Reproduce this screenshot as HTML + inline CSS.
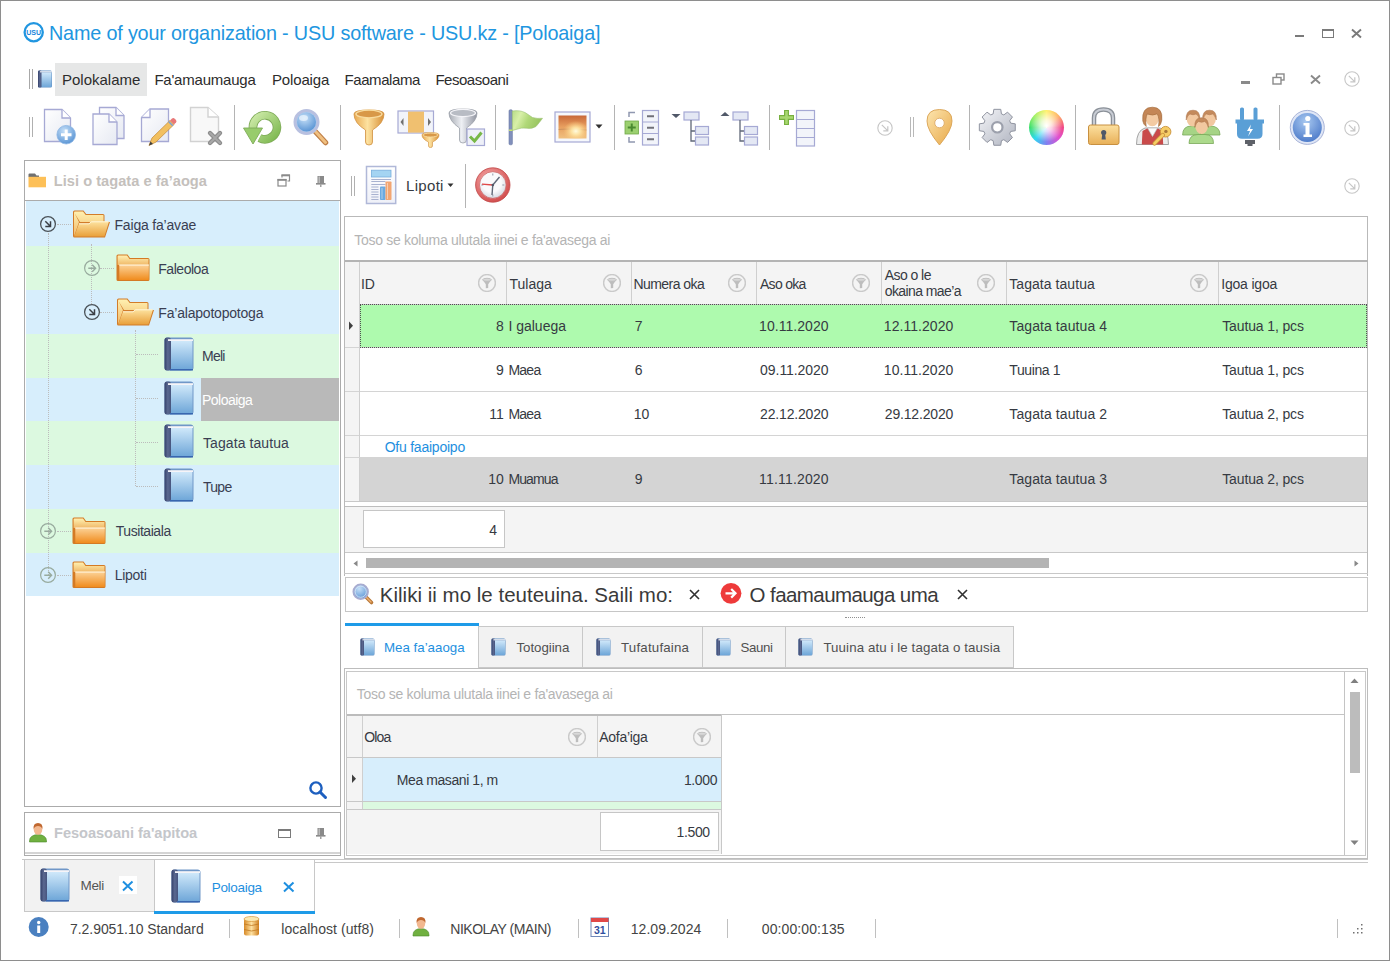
<!DOCTYPE html>
<html><head><meta charset="utf-8"><style>
*{margin:0;padding:0;box-sizing:border-box}
html,body{width:1390px;height:961px;overflow:hidden;background:#fff}
body{position:relative;font-family:"Liberation Sans",sans-serif;color:#333}
.a{position:absolute}
.t{position:absolute;white-space:nowrap;line-height:1}
svg{position:absolute;overflow:visible}
</style></head><body>
<svg width="0" height="0" style="position:absolute">
<defs>
 <linearGradient id="gBook" x1="0" y1="0" x2="0" y2="1"><stop offset="0" stop-color="#cfe8fa"/><stop offset="1" stop-color="#6ea6d8"/></linearGradient>
 <linearGradient id="gSpine" x1="0" y1="0" x2="1" y2="0"><stop offset="0" stop-color="#34406a"/><stop offset="0.5" stop-color="#5a6890"/><stop offset="1" stop-color="#46547e"/></linearGradient>
 <symbol id="book" viewBox="0 0 30 34">
  <rect x="0.5" y="0.5" width="29" height="33" rx="3" fill="#7097c8"/>
  <rect x="1.5" y="4" width="27" height="28.5" fill="url(#gBook)"/>
  <rect x="0.5" y="0.5" width="6.5" height="33" rx="2.5" fill="url(#gSpine)"/>
  <rect x="4" y="2.2" width="25" height="1.8" fill="#f6f4f8"/>
  <rect x="6" y="32" width="23" height="1.5" fill="#3866b0"/>
 </symbol>
 <symbol id="bookS" viewBox="0 0 15 18">
  <rect x="0.5" y="0.5" width="14" height="17" rx="1.5" fill="#5f8fc4"/>
  <rect x="1" y="2.5" width="13" height="14.5" fill="url(#gBook)"/>
  <rect x="0.5" y="0.5" width="3.5" height="17" rx="1.2" fill="url(#gSpine)"/>
  <rect x="2.5" y="1.2" width="12" height="1.2" fill="#f0f0f4"/>
 </symbol>
 <linearGradient id="gFoldB" x1="0" y1="0" x2="0" y2="1"><stop offset="0" stop-color="#fff0b0"/><stop offset="1" stop-color="#f0b868"/></linearGradient>
 <linearGradient id="gFoldF" x1="0" y1="0" x2="0" y2="1"><stop offset="0" stop-color="#fde3a0"/><stop offset="1" stop-color="#e9a03a"/></linearGradient>
 <linearGradient id="gFoldC" x1="0" y1="0" x2="0" y2="1"><stop offset="0" stop-color="#fcd49a"/><stop offset="1" stop-color="#f08c1e"/></linearGradient>
 <symbol id="fOpen" viewBox="0 0 38 28">
  <path d="M1 2Q1 0.5 2.5 0.5H11.5L14.2 4H31Q32.5 4 32.5 5.5V12H38L33 27.5H2.5Q1 27.5 1 26Z" fill="#d27c2a"/>
  <path d="M2 2.2Q2 1.5 3 1.5H11L13.7 5H31Q31.5 5 31.5 5.5V12H8Z M2 2 V26.5 L7 12" fill="url(#gFoldB)"/>
  <path d="M7 13.5H17L19.5 11.5H37L32.4 26.5H2.2Z" fill="url(#gFoldF)"/>
  <path d="M7 13.8H17L19.5 11.8H36.5" fill="none" stroke="#fff6d8" stroke-width="1"/>
 </symbol>
 <symbol id="fClosed" viewBox="0 0 34 27">
  <path d="M0.5 2Q0.5 0.5 2 0.5H11.5L14 4H32Q33.5 4 33.5 5.5V25.5Q33.5 27 32 27H2Q0.5 27 0.5 25.5Z" fill="#d47a24"/>
  <path d="M1.6 2.2Q1.6 1.5 2.4 1.5H11L13.5 5H32.5V11H1.6Z" fill="url(#gFoldB)"/>
  <rect x="3.3" y="10.5" width="29.5" height="15.5" fill="url(#gFoldC)"/>
  <rect x="3.3" y="10.6" width="29.5" height="1" fill="#fff4dc"/>
 </symbol>
 <symbol id="expO" viewBox="0 0 18 18">
  <circle cx="9" cy="9" r="7.4" fill="none" stroke="#4a5258" stroke-width="1.3"/>
  <path d="M6.3 6.3L11.3 11.3M11.5 6.2V11.5H6.3" fill="none" stroke="#3a3f45" stroke-width="1.5"/>
 </symbol>
 <symbol id="expC" viewBox="0 0 18 18">
  <circle cx="9" cy="9" r="7.4" fill="none" stroke="#98ab9e" stroke-width="1.2"/>
  <path d="M5.3 9.2H12.3M9.2 5.7L12.6 9.2L9.2 12.7" fill="none" stroke="#98ab9e" stroke-width="1.4"/>
 </symbol>
 <symbol id="filt" viewBox="0 0 18 18">
  <circle cx="9" cy="9" r="8.4" fill="none" stroke="#cacaca" stroke-width="1.5"/>
  <path d="M4.6 5.8H13.4L10.2 10.2V14L7.8 14.2V10.2Z" fill="#bdbdbd"/>
  <ellipse cx="9" cy="5.8" rx="4.4" ry="1.5" fill="#d8d8d8" stroke="#bdbdbd" stroke-width="0.9"/>
 </symbol>
 <symbol id="cirArr" viewBox="0 0 16 16">
  <circle cx="8" cy="8" r="7.2" fill="none" stroke="#c6c6c6" stroke-width="1.1"/>
  <path d="M4.8 4.8L10.6 10.6M10.8 6.3V10.8H6.3" fill="none" stroke="#c6c6c6" stroke-width="1.2"/>
 </symbol>
</defs></svg>
<div class="a" style="left:0px;top:0px;width:1390px;height:961px;border:1px solid #8e8e8e"></div>
<svg style="left:23px;top:22px" width="22" height="22" viewBox="0 0 22 22"><circle cx="10.7" cy="10.2" r="9.1" fill="none" stroke="#2196e0" stroke-width="2.3"/><text x="3.2" y="12.8" font-family="Liberation Sans" font-size="7.2" font-weight="bold" fill="#1a86dc" textLength="15" lengthAdjust="spacingAndGlyphs">USU</text></svg>
<div class="t" style="top:24.24px;font-size:19.8px;color:#2196e0;letter-spacing:-0.169px;left:49.00px;">Name of your organization - USU software - USU.kz - [Poloaiga]</div>
<div class="a" style="left:1295px;top:35px;width:9px;height:2px;background:#7a7a7a"></div>
<div class="a" style="left:1322px;top:29px;width:12px;height:9px;border:1px solid #7a7a7a;border-top-width:2px"></div>
<svg style="left:1351px;top:29px" width="11" height="9" viewBox="0 0 11 9"><path d="M1 0.5L10 8.5M10 0.5L1 8.5" stroke="#7a7a7a" stroke-width="1.9"/></svg>
<div class="a" style="left:29px;top:69px;width:1px;height:20px;background:#a8a8a8"></div>
<div class="a" style="left:32px;top:69px;width:1px;height:20px;background:#a8a8a8"></div>
<svg style="left:37px;top:70px" width="16" height="18"><use href="#bookS"/></svg>
<div class="a" style="left:55px;top:63px;width:92px;height:33px;background:#e6e7e7"></div>
<div class="t" style="top:72.00px;font-size:15px;color:#2c2c2c;left:62.00px;">Polokalame</div>
<div class="t" style="top:72.00px;font-size:15px;color:#2c2c2c;letter-spacing:-0.219px;left:154.40px;">Fa'amaumauga</div>
<div class="t" style="top:72.00px;font-size:15px;color:#2c2c2c;letter-spacing:-0.148px;left:272.00px;">Poloaiga</div>
<div class="t" style="top:72.00px;font-size:15px;color:#2c2c2c;letter-spacing:-0.419px;left:344.50px;">Faamalama</div>
<div class="t" style="top:72.00px;font-size:15px;color:#2c2c2c;letter-spacing:-0.468px;left:435.40px;">Fesoasoani</div>
<div class="a" style="left:1241px;top:81px;width:9px;height:3px;background:#8a8a8a"></div>
<svg style="left:1272px;top:73px" width="13" height="12" viewBox="0 0 13 12"><rect x="4.5" y="1" width="7.5" height="6" fill="none" stroke="#8a8a8a" stroke-width="1.4"/><rect x="1" y="4.5" width="8" height="6.5" fill="#fff" stroke="#8a8a8a" stroke-width="1.4"/></svg>
<svg style="left:1310px;top:75px" width="11" height="9" viewBox="0 0 11 9"><path d="M1 0.5L10 8.5M10 0.5L1 8.5" stroke="#8a8a8a" stroke-width="1.9"/></svg>
<svg style="left:1344px;top:71px" width="16" height="16"><use href="#cirArr"/></svg>
<div class="a" style="left:29px;top:117px;width:1px;height:20px;background:#b0b0b0"></div>
<div class="a" style="left:32px;top:117px;width:1px;height:20px;background:#b0b0b0"></div>
<svg width="0" height="0" style="position:absolute"><defs>
    <linearGradient id="gPage" x1="0" y1="0" x2="1" y2="1"><stop offset="0" stop-color="#ffffff"/><stop offset="1" stop-color="#e6e9f2"/></linearGradient>
    <radialGradient id="gBlueC" cx="0.4" cy="0.3" r="0.8"><stop offset="0" stop-color="#c6e0f8"/><stop offset="1" stop-color="#4e8cd0"/></radialGradient>
    <linearGradient id="gGold" x1="0" y1="0" x2="1" y2="0"><stop offset="0" stop-color="#e8a850"/><stop offset="0.45" stop-color="#fde2a0"/><stop offset="1" stop-color="#d89038"/></linearGradient>
    <linearGradient id="gSilver" x1="0" y1="0" x2="1" y2="0"><stop offset="0" stop-color="#a8acb4"/><stop offset="0.45" stop-color="#eef0f4"/><stop offset="1" stop-color="#9094a0"/></linearGradient>
    <linearGradient id="gGreen" x1="0" y1="0" x2="1" y2="1"><stop offset="0" stop-color="#cdeaa8"/><stop offset="1" stop-color="#7db850"/></linearGradient>
    </defs></svg>
<svg style="left:40px;top:104px" width="40" height="44" viewBox="0 0 40 44"><path d="M4.5 5.5H22L30.5 14V37.5H4.5Z" fill="url(#gPage)" stroke="#a6a9d4" stroke-width="1.3"/>
      <path d="M22 5.5V14H30.5" fill="#fff" stroke="#a6a9d4" stroke-width="1.3"/>
      <circle cx="26.2" cy="30.7" r="9.3" fill="url(#gBlueC)" stroke="#8fb8e4" stroke-width="0.8"/>
      <path d="M26.2 25.5V36M21 30.7H31.5" stroke="#fff" stroke-width="3"/></svg>
<svg style="left:88px;top:103px" width="40" height="44" viewBox="0 0 40 44"><path d="M11.5 4.5H28L36 12.5V35.5H11.5Z" fill="url(#gPage)" stroke="#a6a9d4" stroke-width="1.3"/>
      <path d="M28 4.5V12.5H36" fill="#fff" stroke="#a6a9d4" stroke-width="1.3"/>
      <path d="M5 11H21L29 19V41.5H5Z" fill="url(#gPage)" stroke="#a6a9d4" stroke-width="1.3"/>
      <path d="M21 11V19H29" fill="#fff" stroke="#a6a9d4" stroke-width="1.3"/></svg>
<svg style="left:137px;top:103px" width="42" height="46" viewBox="0 0 42 46"><path d="M13 6H31.5V38.5H4.5V14.5Z" fill="url(#gPage)" stroke="#a6a9d4" stroke-width="1.3"/>
      <path d="M13 6V14.5H4.5" fill="#fff" stroke="#a6a9d4" stroke-width="1.3"/>
      <path d="M12 42.5L15 35L33 17.5L37 21.5L19 39Z" fill="#f2c060" stroke="#c89040" stroke-width="0.8"/>
      <path d="M33 17.5L35 15.5Q36.5 14.5 38 16L39 17Q40 18.5 39 19.5L37 21.5Z" fill="#e87878"/>
      <path d="M31.8 18.7L35.8 22.7" stroke="#7aa0d8" stroke-width="1.5"/>
      <path d="M12 42.5L13.5 38.5L16 41Z" fill="#404040"/></svg>
<svg style="left:186px;top:103px" width="42" height="46" viewBox="0 0 42 46"><path d="M4.5 4.5H22L32.5 14V38.5H4.5Z" fill="#f8f8f8" stroke="#d2d2d2" stroke-width="1.4"/>
      <path d="M22 4.5V14H32.5" fill="#fff" stroke="#d2d2d2" stroke-width="1.4"/>
      <path d="M24 30L34 40M34 30L24 40" stroke="#8c8c8c" stroke-width="4.4" stroke-linecap="round"/>
      <path d="M24 30L34 40M34 30L24 40" stroke="#a8a8a8" stroke-width="2" stroke-linecap="round"/></svg>
<div class="a" style="left:234px;top:105px;width:1px;height:45px;background:#b4b4b4"></div>
<svg style="left:240px;top:107px" width="44" height="40" viewBox="0 0 44 40"><path d="M13 21.5A12 12 0 1 1 19.5 31" fill="none" stroke="#7eaa58" stroke-width="8.6"/>
      <path d="M13 21.5A12 12 0 1 1 19.5 31" fill="none" stroke="url(#gGreen)" stroke-width="7"/>
      <path d="M3.5 21H22.5L13 37Z" fill="#98cc6c" stroke="#7eaa58" stroke-width="0.9" stroke-linejoin="round"/></svg>
<svg style="left:290px;top:106px" width="42" height="42" viewBox="0 0 42 42"><path d="M22 22L35.5 36.5" stroke="#c08048" stroke-width="5.5" stroke-linecap="round"/>
      <path d="M25 25L35.5 36.5" stroke="#f0c080" stroke-width="3" stroke-linecap="round"/>
      <circle cx="16.5" cy="16" r="11.5" fill="#a8ccf0" stroke="#b8c0e0" stroke-width="3"/>
      <circle cx="16.5" cy="16" r="9.5" fill="url(#gBlueC)"/>
      <ellipse cx="13.5" cy="12" rx="4.5" ry="3" fill="#e8f2fc" opacity="0.8"/></svg>
<div class="a" style="left:340px;top:105px;width:1px;height:45px;background:#b4b4b4"></div>
<svg style="left:350px;top:106px" width="38" height="42" viewBox="0 0 38 42"><path d="M4 8Q4 4 19 4Q34 4 34 8Q34 17 22.5 24V36Q22.5 39 19 39Q15.5 39 15.5 36V24Q4 17 4 8Z" fill="url(#gGold)" stroke="#d09040" stroke-width="0.8"/>
      <ellipse cx="19" cy="8" rx="13" ry="3.8" fill="#d89848" stroke="#f8dca0" stroke-width="1.3"/></svg>
<svg style="left:395px;top:108px" width="46" height="40" viewBox="0 0 46 40"><rect x="3" y="3" width="35.5" height="22" fill="#f2f4fa" stroke="#a6a9d4" stroke-width="1.2"/>
      <rect x="13" y="3.6" width="16" height="21" fill="#f0c070"/>
      <path d="M8.5 10L5.5 14L8.5 18Z M33 10L36 14L33 18Z" fill="#707070"/>
      <path d="M27 27Q27 24.5 35.5 24.5Q44 24.5 44 27Q44 31 37.5 34V38Q37.5 39.5 35.5 39.5Q33.5 39.5 33.5 38V34Q27 31 27 27Z" fill="url(#gGold)" stroke="#d09040" stroke-width="0.6"/>
      <ellipse cx="35.5" cy="27" rx="7.5" ry="2" fill="#d89848" stroke="#f8dca0" stroke-width="0.9"/></svg>
<svg style="left:446px;top:105px" width="42" height="44" viewBox="0 0 42 44"><path d="M3 8Q3 4 17 4Q31 4 31 8Q31 16 20.5 23V35Q20.5 38 17 38Q13.5 38 13.5 35V23Q3 16 3 8Z" fill="url(#gSilver)" stroke="#9aa0a8" stroke-width="0.8"/>
      <ellipse cx="17" cy="8" rx="12.5" ry="3.6" fill="#b8bcc4" stroke="#f4f4f8" stroke-width="1.2"/>
      <rect x="21" y="24" width="17.5" height="16.5" fill="#eef0f8" stroke="#a6a9d4" stroke-width="1.2"/>
      <path d="M24 31.5L28.5 36L35.5 27.5" fill="none" stroke="#78b848" stroke-width="3"/></svg>
<div class="a" style="left:495px;top:105px;width:1px;height:45px;background:#b4b4b4"></div>
<svg style="left:505px;top:106px" width="42" height="42" viewBox="0 0 42 42"><defs><linearGradient id="gFlag" x1="0" y1="0" x2="1" y2="0.3"><stop offset="0" stop-color="#b8dc88"/><stop offset="0.3" stop-color="#d8f0a8"/><stop offset="0.6" stop-color="#b0d878"/><stop offset="1" stop-color="#98c460"/></linearGradient></defs>
      <rect x="4" y="3.8" width="3.4" height="35" rx="1.2" fill="#8290bc" stroke="#6a78a4" stroke-width="0.6"/>
      <rect x="4" y="23.5" width="3.4" height="1.5" fill="#c8e070"/>
      <path d="M7.4 5Q15 3.8 20.5 6.8Q24.5 9.5 27.5 11.5Q32 12.8 37.5 12.3Q34.5 16.5 31 20.5Q27 23.2 22 22.2Q16 21.5 12 23.2L7.4 24.5Z" fill="url(#gFlag)" stroke="#98c070" stroke-width="0.6"/></svg>
<svg style="left:552px;top:109px" width="42" height="36" viewBox="0 0 42 36"><defs><linearGradient id="gSun" x1="0" y1="0" x2="0" y2="1"><stop offset="0" stop-color="#c86838"/><stop offset="0.5" stop-color="#e8a060"/><stop offset="1" stop-color="#f0c080"/></linearGradient>
      <radialGradient id="gGlow" cx="0.62" cy="0.68" r="0.45"><stop offset="0" stop-color="#fffbe0"/><stop offset="0.35" stop-color="#ffe8a8" stop-opacity="0.9"/><stop offset="1" stop-color="#ffd080" stop-opacity="0"/></radialGradient></defs>
      <rect x="3" y="3" width="35" height="30" fill="#f6f8fc" stroke="#a6a9d4" stroke-width="1.2"/>
      <rect x="6.5" y="6.5" width="28" height="23" fill="url(#gSun)"/>
      <path d="M6.5 20.5Q16 19.5 34.5 21" stroke="#a07050" stroke-width="0.8" fill="none" opacity="0.5"/>
      <rect x="6.5" y="6.5" width="28" height="23" fill="url(#gGlow)"/></svg>
<svg style="left:595px;top:124px" width="9" height="5" viewBox="0 0 9 5"><path d="M0.5 0.5H7.5L4 4.5Z" fill="#303030"/></svg>
<div class="a" style="left:614px;top:105px;width:1px;height:45px;background:#b4b4b4"></div>
<svg style="left:622px;top:107px" width="42" height="42" viewBox="0 0 42 42"><path d="M7 10V5.5H13 M7 30V35H13" fill="none" stroke="#9098b0" stroke-width="1.5"/>
      <rect x="3" y="14" width="13.5" height="13" fill="#9cd070" stroke="#70a848" stroke-width="0.8"/>
      <path d="M9.75 16.5V24.5M5.75 20.5H13.75" stroke="#4a8a30" stroke-width="2"/>
      <rect x="20.5" y="3.5" width="16" height="34.5" fill="#f2f4fa" stroke="#a6a9d4" stroke-width="1.2"/>
      <path d="M20.5 15H36.5M20.5 26.5H36.5" stroke="#a6a9d4" stroke-width="1.2"/>
      <path d="M25 9.3H32M25 20.8H32M25 32.3H32" stroke="#707078" stroke-width="2"/></svg>
<svg style="left:668px;top:107px" width="44" height="40" viewBox="0 0 44 40"><path d="M3.5 7H12.5L8 11Z" fill="#505868"/><rect x="16" y="5" width="15" height="8" fill="#e4e8f4" stroke="#a6a9d4" stroke-width="1.2"/>
        <path d="M23 13V34H28 M23 24H28" fill="none" stroke="#606878" stroke-width="1.3"/>
        <rect x="27.5" y="19.5" width="13" height="8" fill="#e4e8f4" stroke="#a6a9d4" stroke-width="1.2"/>
        <rect x="27.5" y="30" width="13" height="8" fill="#e4e8f4" stroke="#a6a9d4" stroke-width="1.2"/></svg>
<svg style="left:717px;top:107px" width="44" height="40" viewBox="0 0 44 40"><path d="M3.5 9L8 5L12.5 9Z" fill="#505868"/><rect x="16" y="5" width="15" height="8" fill="#e4e8f4" stroke="#a6a9d4" stroke-width="1.2"/>
        <path d="M23 13V34H28 M23 24H28" fill="none" stroke="#606878" stroke-width="1.3"/>
        <rect x="27.5" y="19.5" width="13" height="8" fill="#e4e8f4" stroke="#a6a9d4" stroke-width="1.2"/>
        <rect x="27.5" y="30" width="13" height="8" fill="#e4e8f4" stroke="#a6a9d4" stroke-width="1.2"/></svg>
<div class="a" style="left:769px;top:105px;width:1px;height:45px;background:#b4b4b4"></div>
<svg style="left:776px;top:106px" width="42" height="42" viewBox="0 0 42 42"><path d="M10.5 4V19M3 11.5H18" stroke="#78b040" stroke-width="5"/>
      <path d="M10.5 5V18M4 11.5H17" stroke="#a8d870" stroke-width="2.6"/>
      <rect x="20.5" y="4.5" width="18" height="35.5" fill="#f2f4fa" stroke="#a6a9d4" stroke-width="1.2"/>
      <path d="M20.5 13.5H38.5M20.5 22.5H38.5M20.5 31.5H38.5" stroke="#a6a9d4" stroke-width="1.1"/></svg>
<svg style="left:877px;top:120px" width="16" height="16"><use href="#cirArr"/></svg>
<div class="a" style="left:910px;top:117px;width:1px;height:20px;background:#b8b8b8"></div>
<div class="a" style="left:913px;top:117px;width:1px;height:20px;background:#b8b8b8"></div>
<svg style="left:922px;top:106px" width="36" height="42" viewBox="0 0 36 42"><defs><linearGradient id="gPin" x1="0" y1="0" x2="1" y2="1"><stop offset="0" stop-color="#fde6b0"/><stop offset="1" stop-color="#e8a848"/></linearGradient></defs>
      <path d="M17.5 39Q5 24 5 15Q5 3.5 17.5 3.5Q30 3.5 30 15Q30 24 17.5 39Z" fill="url(#gPin)" stroke="#d8a050" stroke-width="0.9"/>
      <circle cx="17.5" cy="17" r="4.8" fill="#fff" stroke="#e0b070" stroke-width="1"/></svg>
<div class="a" style="left:969px;top:105px;width:1px;height:45px;background:#b4b4b4"></div>
<svg style="left:978px;top:108px" width="38" height="38" viewBox="0 0 38 38"><defs><linearGradient id="gGear" x1="0" y1="0" x2="1" y2="1"><stop offset="0" stop-color="#f4f5f8"/><stop offset="1" stop-color="#b0b4c0"/></linearGradient></defs>
      <polygon points="15.16,5.93 15.84,1.33 22.76,1.33 23.44,5.93 25.83,6.92 29.56,4.15 34.45,9.04 31.68,12.77 32.67,15.16 37.27,15.84 37.27,22.76 32.67,23.44 31.68,25.83 34.45,29.56 29.56,34.45 25.83,31.68 23.44,32.67 22.76,37.27 15.84,37.27 15.16,32.67 12.77,31.68 9.04,34.45 4.15,29.56 6.92,25.83 5.93,23.44 1.33,22.76 1.33,15.84 5.93,15.16 6.92,12.77 4.15,9.04 9.04,4.15 12.77,6.92" fill="url(#gGear)" stroke="#9094a0" stroke-width="1" stroke-linejoin="round"/>
      <circle cx="19.3" cy="19.3" r="5.2" fill="#fff" stroke="#9ca0ac" stroke-width="2.2"/></svg>
<div class="a" style="left:1029px;top:110px;width:35px;height:35px;border-radius:50%;background:conic-gradient(from 0deg,#fff060,#ffb060 45deg,#f04888 90deg,#e050d0 130deg,#8080f0 180deg,#30d8f0 225deg,#40e070 270deg,#a0f060 315deg,#fff060)"></div>
<div class="a" style="left:1029px;top:110px;width:35px;height:35px;border-radius:50%;background:radial-gradient(circle at 50% 45%,rgba(255,255,255,1) 0,rgba(255,255,255,0.75) 22%,rgba(255,255,255,0) 62%)"></div>
<div class="a" style="left:1075px;top:105px;width:1px;height:45px;background:#b4b4b4"></div>
<svg style="left:1085px;top:106px" width="38" height="42" viewBox="0 0 38 42"><defs><linearGradient id="gLock" x1="0" y1="0" x2="0" y2="1"><stop offset="0" stop-color="#fce0a0"/><stop offset="1" stop-color="#e8b058"/></linearGradient></defs>
      <path d="M9 20V12Q9 3.5 18.5 3.5Q28 3.5 28 12V20" fill="none" stroke="#8a9098" stroke-width="4.5"/>
      <path d="M9 20V12Q9 3.5 18.5 3.5Q28 3.5 28 12V20" fill="none" stroke="#c8ccd4" stroke-width="2"/>
      <rect x="3.5" y="19" width="30.5" height="19.5" rx="2" fill="url(#gLock)" stroke="#c89040" stroke-width="1"/>
      <circle cx="18.7" cy="26.5" r="2.6" fill="#505868"/><path d="M17.3 27.5H20.1L20.8 33.5H16.6Z" fill="#505868"/></svg>
<svg style="left:1133px;top:104px" width="42" height="44" viewBox="0 0 42 44"><path d="M3.5 40.5Q3.5 26.5 12 24H27Q35.5 26.5 35.5 40.5Z" fill="#ececec" stroke="#9a9a9a" stroke-width="0.9"/>
      <path d="M8.8 40.5L9.5 27L15 24L19.5 32.5L24 24L29.5 27L30.2 40.5Z" fill="#c94a4a"/>
      <path d="M14.5 24L19.5 32.5L24.5 24Z" fill="#fafafa" stroke="#b8b8b8" stroke-width="0.7"/>
      <ellipse cx="19.3" cy="14.5" rx="6.6" ry="7.8" fill="#f3caa2"/>
      <path d="M9.8 17Q8.5 3 19.5 3.2Q30 3.4 28.8 16Q28 21 25.5 22.5Q26.8 14 24.2 9.8Q20 12.2 14.2 10Q12.2 14 13.2 22.5Q10.3 20.5 9.8 17Z" fill="#c48656" stroke="#a06838" stroke-width="0.6"/>
      <circle cx="32.6" cy="27.7" r="5.3" fill="#f6cd66" stroke="#c89038" stroke-width="0.9"/><circle cx="32.9" cy="27.4" r="1.7" fill="#a87838"/>
      <path d="M29.8 31L21.5 39.5" stroke="#c89038" stroke-width="4.2" stroke-linecap="round"/><path d="M29.8 31L21.5 39.5" stroke="#f6cd66" stroke-width="2.6" stroke-linecap="round"/></svg>
<svg style="left:1180px;top:106px" width="42" height="42" viewBox="0 0 42 42"><path d="M2.6 29Q2.6 20 11.5 20H14Q21 20 21 29Z" fill="#a6d486" stroke="#78a858" stroke-width="0.8"/><path d="M20.5 29Q20.5 20 27.5 20H30Q40 20 40 29Z" fill="#a6d486" stroke="#78a858" stroke-width="0.8"/><ellipse cx="13" cy="13" rx="6.3" ry="7.6" fill="#f2c8a0"/><path d="M6.2 14Q5.5 4 13 4.2Q20.5 4 19.8 14Q18.5 9 16 8Q13 9.5 10 8Q7.5 9 6.2 14Z" fill="#c48a5c" stroke="#a87048" stroke-width="0.5"/><ellipse cx="29.5" cy="13" rx="6.3" ry="7.6" fill="#f2c8a0"/><path d="M22.7 14Q22.0 4 29.5 4.2Q37.0 4 36.3 14Q35.0 9 32.5 8Q29.5 9.5 26.5 8Q24.0 9 22.7 14Z" fill="#c48a5c" stroke="#a87048" stroke-width="0.5"/><path d="M9 37.5Q9 28.5 18 28.5H25Q33.5 28.5 33.5 37.5Z" fill="#acda8c" stroke="#78a858" stroke-width="0.8"/><ellipse cx="21.6" cy="20.5" rx="6.3" ry="7.6" fill="#f2c8a0"/><path d="M14.8 21.5Q14.100000000000001 11.5 21.6 11.7Q29.1 11.5 28.400000000000002 21.5Q27.1 16.5 24.6 15.5Q21.6 17.0 18.6 15.5Q16.1 16.5 14.8 21.5Z" fill="#c48a5c" stroke="#a87048" stroke-width="0.5"/></svg>
<svg style="left:1232px;top:104px" width="36" height="46" viewBox="0 0 36 46"><rect x="8" y="3.5" width="4" height="13" rx="1.6" fill="#5a9fd6"/><rect x="21.5" y="3.5" width="4" height="13" rx="1.6" fill="#5a9fd6"/>
      <path d="M3.5 15.5H32V19.5H30.5V30Q30.5 34.8 25.5 34.8H10Q5 34.8 5 30V19.5H3.5Z" fill="#5a9fd6"/>
      <path d="M19 20.5L15 27H18L16 32.5L21 25H18Z" fill="#fff"/>
      <rect x="13" y="36" width="10" height="4" fill="#5e6168"/><rect x="15.5" y="40" width="5" height="2" fill="#5e6168"/></svg>
<div class="a" style="left:1279px;top:105px;width:1px;height:45px;background:#b4b4b4"></div>
<svg style="left:1287px;top:107px" width="42" height="42" viewBox="0 0 42 42"><defs><radialGradient id="gInfo" cx="0.45" cy="0.3" r="0.75"><stop offset="0" stop-color="#a8c8f0"/><stop offset="1" stop-color="#4a78c8"/></radialGradient></defs>
      <circle cx="20.3" cy="20.4" r="17" fill="#dfe6f6" stroke="#a8b4d8" stroke-width="1"/>
      <circle cx="20.3" cy="20.4" r="14.5" fill="url(#gInfo)"/>
      <circle cx="20.8" cy="11.5" r="2.6" fill="#fff"/>
      <path d="M16.5 16H22.5V27.5H25V30H16.5V27.5H18.5V18.5H16.5Z" fill="#fff"/></svg>
<svg style="left:1344px;top:120px" width="16" height="16"><use href="#cirArr"/></svg>
<div class="a" style="left:24px;top:160px;width:317px;height:647px;border:1px solid #ababab;background:#fff"></div>
<div class="a" style="left:24px;top:200px;width:317px;height:1px;background:#ababab"></div>
<svg style="left:28px;top:173px" width="20" height="16" viewBox="0 0 20 16"><path d="M0.5 1.5Q0.5 0.5 1.5 0.5H7L8.5 2.5H11V4H0.5Z" fill="#707070"/><rect x="0.5" y="3.8" width="17.5" height="10.5" fill="#fdc058"/></svg>
<div class="t" style="top:173.54px;font-size:14.6px;color:#c4c0bc;font-weight:bold;letter-spacing:0.030px;left:53.80px;">Lisi o tagata e fa’aoga</div>
<svg style="left:276px;top:173px" width="16" height="16" viewBox="0 0 16 16"><path d="M6 4.5V2H13.5V8H11.5" fill="none" stroke="#8a8a8a" stroke-width="1.2"/><rect x="5.5" y="1.5" width="8.5" height="1.8" fill="#8a8a8a"/><rect x="2" y="6.5" width="8" height="6.5" fill="#fff" stroke="#8a8a8a" stroke-width="1.2"/><rect x="1.5" y="6" width="9" height="1.8" fill="#8a8a8a"/></svg>
<svg style="left:314px;top:174px" width="14" height="14" viewBox="0 0 14 14"><rect x="3.5" y="2" width="6.5" height="7.2" fill="#8a8a8a"/><rect x="4.6" y="2.5" width="1.2" height="6.5" fill="#c8c8c8"/><rect x="2" y="9" width="9.5" height="1.6" fill="#8a8a8a"/><rect x="6.2" y="10.5" width="1.2" height="2.5" fill="#8a8a8a"/></svg>
<div class="a" style="left:26px;top:201px;width:313px;height:45px;background:#d7eefc"></div>
<div class="a" style="left:26px;top:246px;width:313px;height:44px;background:#dcf9e0"></div>
<div class="a" style="left:26px;top:290px;width:313px;height:44px;background:#d7eefc"></div>
<div class="a" style="left:26px;top:334px;width:313px;height:44px;background:#dcf9e0"></div>
<div class="a" style="left:26px;top:378px;width:313px;height:43px;background:#d7eefc"></div>
<div class="a" style="left:26px;top:421px;width:313px;height:44px;background:#dcf9e0"></div>
<div class="a" style="left:26px;top:465px;width:313px;height:44px;background:#d7eefc"></div>
<div class="a" style="left:26px;top:509px;width:313px;height:44px;background:#dcf9e0"></div>
<div class="a" style="left:26px;top:553px;width:313px;height:43px;background:#d7eefc"></div>
<div class="a" style="left:48px;top:233px;width:1px;height:342px;border-left:1px dotted #bcbcbc"></div>
<div class="a" style="left:57px;top:224px;width:14px;height:1px;border-top:1px dotted #bcbcbc"></div>
<div class="a" style="left:91px;top:244px;width:1px;height:60px;border-left:1px dotted #bcbcbc"></div>
<div class="a" style="left:100px;top:268px;width:14px;height:1px;border-top:1px dotted #bcbcbc"></div>
<div class="a" style="left:100px;top:312px;width:14px;height:1px;border-top:1px dotted #bcbcbc"></div>
<div class="a" style="left:135px;top:330px;width:1px;height:156px;border-left:1px dotted #bcbcbc"></div>
<div class="a" style="left:136px;top:354px;width:22px;height:1px;border-top:1px dotted #bcbcbc"></div>
<div class="a" style="left:136px;top:398px;width:22px;height:1px;border-top:1px dotted #bcbcbc"></div>
<div class="a" style="left:136px;top:442px;width:22px;height:1px;border-top:1px dotted #bcbcbc"></div>
<div class="a" style="left:136px;top:486px;width:22px;height:1px;border-top:1px dotted #bcbcbc"></div>
<div class="a" style="left:57px;top:531px;width:14px;height:1px;border-top:1px dotted #bcbcbc"></div>
<div class="a" style="left:57px;top:575px;width:14px;height:1px;border-top:1px dotted #bcbcbc"></div>
<svg style="left:39px;top:215px" width="18" height="18"><use href="#expO"/></svg>
<svg style="left:72px;top:210px" width="38" height="28"><use href="#fOpen"/></svg>
<div class="t" style="top:218.15px;font-size:14px;color:#3a3e52;letter-spacing:-0.189px;left:114.50px;">Faiga fa’avae</div>
<svg style="left:83px;top:259px" width="18" height="18"><use href="#expC"/></svg>
<svg style="left:116px;top:254px" width="34" height="27"><use href="#fClosed"/></svg>
<div class="t" style="top:261.95px;font-size:14px;color:#3a3e52;letter-spacing:-0.474px;left:158.30px;">Faleoloa</div>
<svg style="left:83px;top:303px" width="18" height="18"><use href="#expO"/></svg>
<svg style="left:116px;top:298px" width="38" height="28"><use href="#fOpen"/></svg>
<div class="t" style="top:305.65px;font-size:14px;color:#3a3e52;letter-spacing:-0.201px;left:158.30px;">Fa’alapotopotoga</div>
<svg style="left:164px;top:337px" width="30" height="34"><use href="#book"/></svg>
<div class="t" style="top:349.45px;font-size:14px;color:#3a3e52;letter-spacing:-0.753px;left:202.00px;">Meli</div>
<svg style="left:164px;top:381px" width="30" height="34"><use href="#book"/></svg>
<div class="a" style="left:201px;top:378px;width:138px;height:43px;background:#b9b9b9"></div>
<div class="t" style="top:392.65px;font-size:14px;color:#ffffff;letter-spacing:-0.529px;left:202.00px;">Poloaiga</div>
<svg style="left:164px;top:424px" width="30" height="34"><use href="#book"/></svg>
<div class="t" style="top:436.15px;font-size:14px;color:#3a3e52;letter-spacing:0.078px;left:203.00px;">Tagata tautua</div>
<svg style="left:164px;top:468px" width="30" height="34"><use href="#book"/></svg>
<div class="t" style="top:479.95px;font-size:14px;color:#3a3e52;letter-spacing:-0.735px;left:203.00px;">Tupe</div>
<svg style="left:39px;top:522px" width="18" height="18"><use href="#expC"/></svg>
<svg style="left:72px;top:517px" width="34" height="27"><use href="#fClosed"/></svg>
<div class="t" style="top:524.35px;font-size:14px;color:#3a3e52;letter-spacing:-0.435px;left:115.70px;">Tusitaiala</div>
<svg style="left:39px;top:566px" width="18" height="18"><use href="#expC"/></svg>
<svg style="left:72px;top:561px" width="34" height="27"><use href="#fClosed"/></svg>
<div class="t" style="top:568.15px;font-size:14px;color:#3a3e52;letter-spacing:-0.272px;left:114.70px;">Lipoti</div>
<svg style="left:308px;top:780px" width="22" height="22" viewBox="0 0 22 22"><circle cx="8" cy="8" r="5.6" fill="none" stroke="#1d5fbf" stroke-width="2.4"/><path d="M12 12L17.5 17.5" stroke="#1d5fbf" stroke-width="3" stroke-linecap="round"/></svg>
<div class="a" style="left:24px;top:812px;width:317px;height:44px;border:1px solid #ababab;background:#fff"></div>
<div class="a" style="left:25px;top:852px;width:315px;height:2px;background:#d4d4d4"></div>
<svg style="left:28px;top:822px" width="22" height="22" viewBox="0 0 22 22"><path d="M1.5 19Q1.5 13 10 12.5Q18.5 13 18.5 19V20H1.5Z" fill="#70b040" stroke="#4a8a28" stroke-width="0.6"/><ellipse cx="10" cy="7.5" rx="4.3" ry="5.2" fill="#f2b890"/><path d="M5.5 7Q5 1 10 1Q15 1 14.5 7Q13 4 10 4Q7 4 5.5 7Z" fill="#c06830"/></svg>
<div class="t" style="top:826.14px;font-size:14.6px;color:#c4c6ca;font-weight:bold;letter-spacing:-0.034px;left:54.00px;">Fesoasoani fa'apitoa</div>
<div class="a" style="left:278px;top:829px;width:13px;height:9px;border:1px solid #7a7a7a;border-top-width:2px"></div>
<svg style="left:314px;top:826px" width="14" height="14" viewBox="0 0 14 14"><rect x="3.5" y="2" width="6.5" height="7.2" fill="#8a8a8a"/><rect x="4.6" y="2.5" width="1.2" height="6.5" fill="#c8c8c8"/><rect x="2" y="9" width="9.5" height="1.6" fill="#8a8a8a"/><rect x="6.2" y="10.5" width="1.2" height="2.5" fill="#8a8a8a"/></svg>
<div class="a" style="left:351px;top:176px;width:1px;height:20px;background:#b0b0b0"></div>
<div class="a" style="left:354px;top:176px;width:1px;height:20px;background:#b0b0b0"></div>
<svg style="left:364px;top:165px" width="34" height="40" viewBox="0 0 34 40"><defs><linearGradient id="gRep" x1="0" y1="0" x2="0" y2="1"><stop offset="0" stop-color="#ffffff"/><stop offset="1" stop-color="#eef0f8"/></linearGradient></defs>
      <rect x="2.5" y="1.5" width="29.2" height="37" fill="url(#gRep)" stroke="#b0b8d8" stroke-width="1.5"/>
      <rect x="7.5" y="5.2" width="19.5" height="6.8" fill="#a4d4f2" stroke="#78aedc" stroke-width="0.8"/>
      <path d="M7.3 14.5H27M7.3 16.5H21.5M7.3 19.5H21.5M7.3 22H14.5M7.3 24.5H14.5M7.3 27H14.5M7.3 29.5H14.5M7.3 32H14.5M7.3 34.5H14.5" stroke="#a8b2d0" stroke-width="1"/>
      <rect x="16" y="21.5" width="5.5" height="13.5" rx="0.8" fill="#6aaae0"/>
      <rect x="21.5" y="16.5" width="6" height="18.5" rx="0.8" fill="#f2a672"/>
      <path d="M18 23V34M23.5 18V34" stroke="#ffffff" stroke-width="1" opacity="0.45"/></svg>
<div class="t" style="top:178.20px;font-size:15px;color:#363a42;letter-spacing:0.295px;left:406.10px;">Lipoti</div>
<svg style="left:447px;top:183px" width="7" height="5" viewBox="0 0 7 5"><path d="M0.5 0.5H6.5L3.5 4Z" fill="#303030"/></svg>
<div class="a" style="left:465px;top:164px;width:1px;height:44px;background:#b4b4b4"></div>
<svg style="left:473px;top:166px" width="40" height="40" viewBox="0 0 40 40"><defs><radialGradient id="gClockR" cx="0.4" cy="0.35" r="0.7"><stop offset="0" stop-color="#f8b0b0"/><stop offset="1" stop-color="#d04848"/></radialGradient>
      <radialGradient id="gClock" cx="0.45" cy="0.4" r="0.6"><stop offset="0.6" stop-color="#fafafc"/><stop offset="1" stop-color="#d8dce4"/></radialGradient></defs>
      <circle cx="19.8" cy="19" r="17.2" fill="url(#gClockR)" stroke="#c04848" stroke-width="0.8"/>
      <circle cx="19.8" cy="19" r="13.3" fill="url(#gClock)" stroke="#c86060" stroke-width="0.7"/>
      <path d="M19.8 7.5V9.5M19.8 28.5V30.5M8.3 19H10.3M29.3 19H31.3" stroke="#9098a8" stroke-width="1"/>
      <path d="M19.8 19L26.5 11" stroke="#606878" stroke-width="1.4"/><path d="M19.8 19L19 29" stroke="#606878" stroke-width="1.4"/><path d="M9 18.2L19.8 19" stroke="#e04848" stroke-width="1.3"/>
      <circle cx="19.8" cy="19" r="1.3" fill="#505868"/></svg>
<svg style="left:1344px;top:178px" width="16" height="16"><use href="#cirArr"/></svg>
<div class="a" style="left:344px;top:216px;width:1024px;height:360px;border:1px solid #b9b9b9;border-bottom:none;background:#fff"></div>
<div class="t" style="top:233.15px;font-size:14px;color:#b4b4b4;letter-spacing:-0.296px;left:354.30px;">Toso se koluma ulutala iinei e fa'avasega ai</div>
<div class="a" style="left:345px;top:260px;width:1023px;height:2px;background:#b4b4b4"></div>
<div class="a" style="left:345px;top:262px;width:1022px;height:42px;background:#f4f4f4"></div>
<div class="a" style="left:345px;top:304px;width:1022px;height:1px;background:#c8c8c8"></div>
<div class="a" style="left:359px;top:262px;width:1px;height:42px;background:#cfcfcf"></div>
<div class="a" style="left:506px;top:262px;width:1px;height:42px;background:#cfcfcf"></div>
<div class="a" style="left:631px;top:262px;width:1px;height:42px;background:#cfcfcf"></div>
<div class="a" style="left:756px;top:262px;width:1px;height:42px;background:#cfcfcf"></div>
<div class="a" style="left:881px;top:262px;width:1px;height:42px;background:#cfcfcf"></div>
<div class="a" style="left:1006px;top:262px;width:1px;height:42px;background:#cfcfcf"></div>
<div class="a" style="left:1218px;top:262px;width:1px;height:42px;background:#cfcfcf"></div>
<div class="t" style="top:276.95px;font-size:14px;color:#363a42;left:360.90px;">ID</div>
<svg style="left:477.6px;top:274.4px" width="18" height="18"><use href="#filt"/></svg>
<div class="t" style="top:276.95px;font-size:14px;color:#363a42;left:509.50px;">Tulaga</div>
<svg style="left:602.5px;top:274.4px" width="18" height="18"><use href="#filt"/></svg>
<div class="t" style="top:276.95px;font-size:14px;color:#363a42;letter-spacing:-0.552px;left:633.40px;">Numera oka</div>
<svg style="left:727.5px;top:274.4px" width="18" height="18"><use href="#filt"/></svg>
<div class="t" style="top:276.95px;font-size:14px;color:#363a42;letter-spacing:-0.717px;left:760.00px;">Aso oka</div>
<svg style="left:852px;top:274.4px" width="18" height="18"><use href="#filt"/></svg>
<div class="t" style="top:276.95px;font-size:14px;color:#363a42;letter-spacing:0.053px;left:1009.30px;">Tagata tautua</div>
<svg style="left:1190px;top:274.4px" width="18" height="18"><use href="#filt"/></svg>
<div class="t" style="top:276.95px;font-size:14px;color:#363a42;letter-spacing:-0.178px;left:1221.20px;">Igoa igoa</div>
<div class="t" style="top:267.75px;font-size:14px;color:#363a42;letter-spacing:-0.543px;left:884.70px;">Aso o le</div>
<div class="t" style="top:284.15px;font-size:14px;color:#363a42;letter-spacing:-0.590px;left:884.70px;">okaina mae’a</div>
<svg style="left:977.3px;top:274.4px" width="18" height="18"><use href="#filt"/></svg>
<div class="a" style="left:345px;top:304px;width:14px;height:198px;background:#f4f4f4"></div>
<div class="a" style="left:360px;top:305px;width:1007px;height:42px;background:#aefaae"></div>
<div class="a" style="left:345px;top:347px;width:1022px;height:1px;background:#d4d4d4"></div>
<div class="t" style="top:319.15px;font-size:14px;color:#363a42;left:496.00px;">8</div>
<div class="t" style="top:319.15px;font-size:14px;color:#363a42;left:508.40px;">I galuega</div>
<div class="t" style="top:319.15px;font-size:14px;color:#363a42;left:634.70px;">7</div>
<div class="t" style="top:319.15px;font-size:14px;color:#363a42;letter-spacing:0.051px;left:759.10px;">10.11.2020</div>
<div class="t" style="top:319.15px;font-size:14px;color:#363a42;letter-spacing:0.051px;left:883.80px;">12.11.2020</div>
<div class="t" style="top:319.15px;font-size:14px;color:#363a42;letter-spacing:0.090px;left:1009.30px;">Tagata tautua 4</div>
<div class="t" style="top:319.15px;font-size:14px;color:#363a42;letter-spacing:-0.123px;left:1222.20px;">Tautua 1, pcs</div>
<div class="a" style="left:360px;top:348px;width:1007px;height:43px;background:#ffffff"></div>
<div class="a" style="left:345px;top:391px;width:1022px;height:1px;background:#d4d4d4"></div>
<div class="t" style="top:362.85px;font-size:14px;color:#363a42;left:496.00px;">9</div>
<div class="t" style="top:362.85px;font-size:14px;color:#363a42;letter-spacing:-0.745px;left:508.40px;">Maea</div>
<div class="t" style="top:362.85px;font-size:14px;color:#363a42;left:634.70px;">6</div>
<div class="t" style="top:362.85px;font-size:14px;color:#363a42;letter-spacing:-0.060px;left:760.10px;">09.11.2020</div>
<div class="t" style="top:362.85px;font-size:14px;color:#363a42;letter-spacing:0.051px;left:883.80px;">10.11.2020</div>
<div class="t" style="top:362.85px;font-size:14px;color:#363a42;letter-spacing:-0.397px;left:1009.30px;">Tuuina 1</div>
<div class="t" style="top:362.85px;font-size:14px;color:#363a42;letter-spacing:-0.123px;left:1222.20px;">Tautua 1, pcs</div>
<div class="a" style="left:360px;top:392px;width:1007px;height:43px;background:#ffffff"></div>
<div class="a" style="left:345px;top:435px;width:1022px;height:1px;background:#d4d4d4"></div>
<div class="t" style="top:406.55px;font-size:14px;color:#363a42;left:489.25px;">11</div>
<div class="t" style="top:406.55px;font-size:14px;color:#363a42;letter-spacing:-0.745px;left:508.40px;">Maea</div>
<div class="t" style="top:406.55px;font-size:14px;color:#363a42;left:633.70px;">10</div>
<div class="t" style="top:406.55px;font-size:14px;color:#363a42;letter-spacing:-0.176px;left:760.10px;">22.12.2020</div>
<div class="t" style="top:406.55px;font-size:14px;color:#363a42;letter-spacing:-0.176px;left:884.80px;">29.12.2020</div>
<div class="t" style="top:406.55px;font-size:14px;color:#363a42;letter-spacing:0.090px;left:1009.30px;">Tagata tautua 2</div>
<div class="t" style="top:406.55px;font-size:14px;color:#363a42;letter-spacing:-0.123px;left:1222.20px;">Tautua 2, pcs</div>
<div class="a" style="left:360px;top:304px;width:1007px;height:44px;border:1px dotted #505050"></div>
<svg style="left:348px;top:321px" width="6" height="10" viewBox="0 0 6 10"><path d="M1 0.5L5 4.75L1 9Z" fill="#404040"/></svg>
<div class="a" style="left:359px;top:304px;width:1px;height:198px;background:#cfcfcf"></div>
<div class="a" style="left:360px;top:436px;width:1007px;height:22px;background:#fff"></div>
<div class="t" style="top:440.15px;font-size:14px;color:#1e8fe0;letter-spacing:-0.233px;left:384.70px;">Ofu faaipoipo</div>
<div class="a" style="left:345px;top:457px;width:1022px;height:1px;background:#d4d4d4"></div>
<div class="a" style="left:360px;top:458px;width:1007px;height:43px;background:#d4d4d4"></div>
<div class="t" style="top:472.05px;font-size:14px;color:#363a42;left:488.21px;">10</div>
<div class="t" style="top:472.05px;font-size:14px;color:#363a42;letter-spacing:-0.877px;left:508.40px;">Muamua</div>
<div class="t" style="top:472.05px;font-size:14px;color:#363a42;left:634.70px;">9</div>
<div class="t" style="top:472.05px;font-size:14px;color:#363a42;letter-spacing:0.166px;left:759.10px;">11.11.2020</div>
<div class="t" style="top:472.05px;font-size:14px;color:#363a42;letter-spacing:0.090px;left:1009.30px;">Tagata tautua 3</div>
<div class="t" style="top:472.05px;font-size:14px;color:#363a42;letter-spacing:-0.123px;left:1222.20px;">Tautua 2, pcs</div>
<div class="a" style="left:345px;top:501px;width:1022px;height:1px;background:#c8c8c8"></div>
<div class="a" style="left:345px;top:506px;width:1022px;height:1px;background:#bdbdbd"></div>
<div class="a" style="left:345px;top:507px;width:1022px;height:45px;background:#f4f4f4"></div>
<div class="a" style="left:345px;top:552px;width:1022px;height:1px;background:#c8c8c8"></div>
<div class="a" style="left:363px;top:510px;width:142px;height:38px;background:#fff;border:1px solid #c6c6c6"></div>
<div class="t" style="top:522.65px;font-size:14px;color:#363a42;left:489.30px;">4</div>
<div class="a" style="left:366px;top:558px;width:683px;height:10px;background:#b4b4b4"></div>
<svg style="left:353px;top:560px" width="5" height="7" viewBox="0 0 5 7"><path d="M4.5 0.5V6.5L0.5 3.5Z" fill="#888"/></svg>
<svg style="left:1354px;top:560px" width="5" height="7" viewBox="0 0 5 7"><path d="M0.5 0.5V6.5L4.5 3.5Z" fill="#888"/></svg>
<div class="a" style="left:344px;top:573px;width:1024px;height:1px;background:#c8c8c8"></div>
<div class="a" style="left:345px;top:577px;width:1023px;height:35px;border:1px solid #c6c6c6;background:#fff"></div>
<svg style="left:351px;top:583px" width="24" height="22" viewBox="0 0 24 22"><path d="M14.5 13.5L20.5 19.5" stroke="#b87838" stroke-width="3.6" stroke-linecap="round"/>
      <path d="M15 14L20 19" stroke="#f0b070" stroke-width="1.4" stroke-linecap="round"/>
      <circle cx="9.7" cy="8.7" r="7.3" fill="url(#gBlueC)" stroke="#a8acd0" stroke-width="1.8"/>
      <circle cx="9.7" cy="8.7" r="5.6" fill="none" stroke="#e0e8f8" stroke-width="0.8"/></svg>
<div class="t" style="top:584.55px;font-size:20.5px;color:#3a3a3a;letter-spacing:0.011px;left:379.80px;">Kiliki ii mo le teuteuina. Saili mo:</div>
<svg style="left:689px;top:589px" width="11" height="11" viewBox="0 0 11 11"><path d="M1 1L10 10M10 1L1 10" stroke="#303030" stroke-width="1.6"/></svg>
<svg style="left:720px;top:582px" width="22" height="22" viewBox="0 0 22 22"><circle cx="11" cy="11.3" r="10.4" fill="#ee3a3a"/><path d="M5.5 11.3H15M11.2 7L15.5 11.3L11.2 15.6" fill="none" stroke="#fff" stroke-width="2.2"/></svg>
<div class="t" style="top:584.55px;font-size:20.5px;color:#3a3a3a;letter-spacing:-0.580px;left:749.60px;">O faamaumauga uma</div>
<svg style="left:957px;top:589px" width="11" height="11" viewBox="0 0 11 11"><path d="M1 1L10 10M10 1L1 10" stroke="#303030" stroke-width="1.6"/></svg>
<div class="a" style="left:845px;top:617px;width:20px;height:1px;border-top:1px dotted #909090"></div>
<div class="a" style="left:344px;top:668px;width:1024px;height:1px;background:#c0c0c0"></div>
<div class="a" style="left:345px;top:624px;width:134px;height:45px;background:#fff;border-right:1px solid #c8c8c8"></div>
<div class="a" style="left:345px;top:623px;width:134px;height:3px;background:#1e9be8"></div>
<svg style="left:360px;top:637.5px" width="15" height="18"><use href="#bookS"/></svg>
<div class="t" style="top:640.84px;font-size:13.3px;color:#1e8fe0;left:384.00px;">Mea fa’aaoga</div>
<div class="a" style="left:479px;top:626px;width:104px;height:42px;background:#f2f2f2;border:1px solid #c8c8c8;border-left:none"></div>
<svg style="left:491px;top:637.5px" width="15" height="18"><use href="#bookS"/></svg>
<div class="t" style="top:640.84px;font-size:13.3px;color:#505050;letter-spacing:-0.029px;left:516.40px;">Totogiina</div>
<div class="a" style="left:583px;top:626px;width:120px;height:42px;background:#f2f2f2;border:1px solid #c8c8c8;border-left:none"></div>
<svg style="left:596px;top:637.5px" width="15" height="18"><use href="#bookS"/></svg>
<div class="t" style="top:640.84px;font-size:13.3px;color:#505050;letter-spacing:0.196px;left:621.00px;">Tufatufaina</div>
<div class="a" style="left:703px;top:626px;width:83px;height:42px;background:#f2f2f2;border:1px solid #c8c8c8;border-left:none"></div>
<svg style="left:716px;top:637.5px" width="15" height="18"><use href="#bookS"/></svg>
<div class="t" style="top:640.84px;font-size:13.3px;color:#505050;letter-spacing:-0.414px;left:740.50px;">Sauni</div>
<div class="a" style="left:786px;top:626px;width:228px;height:42px;background:#f2f2f2;border:1px solid #c8c8c8;border-left:none"></div>
<svg style="left:798px;top:637.5px" width="15" height="18"><use href="#bookS"/></svg>
<div class="t" style="top:640.84px;font-size:13.3px;color:#505050;letter-spacing:0.094px;left:823.40px;">Tuuina atu i le tagata o tausia</div>
<div class="a" style="left:344px;top:668px;width:1024px;height:191px;border:1px solid #bdbdbd;background:#fff"></div>
<div class="a" style="left:346px;top:671px;width:1020px;height:185px;border:1px solid #c8c8c8;background:#fff"></div>
<div class="t" style="top:686.75px;font-size:14px;color:#b4b4b4;letter-spacing:-0.296px;left:356.80px;">Toso se koluma ulutala iinei e fa'avasega ai</div>
<div class="a" style="left:347px;top:714px;width:998px;height:1px;background:#c4c4c4"></div>
<div class="a" style="left:1344px;top:672px;width:1px;height:183px;background:#c4c4c4"></div>
<svg style="left:1350px;top:678px" width="9" height="6" viewBox="0 0 9 6"><path d="M0.5 5H8.5L4.5 0.5Z" fill="#808080"/></svg>
<div class="a" style="left:1350px;top:692px;width:10px;height:81px;background:#bcbcbc"></div>
<svg style="left:1350px;top:840px" width="9" height="6" viewBox="0 0 9 6"><path d="M0.5 0.5H8.5L4.5 5Z" fill="#808080"/></svg>
<div class="a" style="left:347px;top:714px;width:375px;height:2px;background:#bcbcbc"></div>
<div class="a" style="left:347px;top:716px;width:375px;height:42px;background:#f4f4f4"></div>
<div class="a" style="left:362px;top:716px;width:1px;height:94px;background:#cfcfcf"></div>
<div class="a" style="left:597px;top:716px;width:1px;height:42px;background:#cfcfcf"></div>
<div class="a" style="left:721px;top:714px;width:1px;height:140px;background:#c8c8c8"></div>
<div class="a" style="left:347px;top:757px;width:375px;height:1px;background:#c8c8c8"></div>
<div class="t" style="top:730.45px;font-size:14px;color:#363a42;letter-spacing:-0.795px;left:364.20px;">Oloa</div>
<svg style="left:567.5px;top:728px" width="18" height="18"><use href="#filt"/></svg>
<div class="t" style="top:730.45px;font-size:14px;color:#363a42;letter-spacing:-0.301px;left:599.30px;">Aofa’iga</div>
<svg style="left:692.7px;top:728px" width="18" height="18"><use href="#filt"/></svg>
<div class="a" style="left:347px;top:758px;width:15px;height:52px;background:#f4f4f4"></div>
<div class="a" style="left:363px;top:758px;width:358px;height:43px;background:#d7eefc"></div>
<div class="a" style="left:347px;top:801px;width:375px;height:1px;background:#c8c8c8"></div>
<div class="a" style="left:363px;top:802px;width:358px;height:7px;background:#dcf9e0"></div>
<svg style="left:351px;top:774px" width="6" height="10" viewBox="0 0 6 10"><path d="M1 0.5L5 4.75L1 9Z" fill="#404040"/></svg>
<div class="t" style="top:772.85px;font-size:14px;color:#363a42;letter-spacing:-0.422px;left:396.80px;">Mea masani 1, m</div>
<div class="t" style="top:772.85px;font-size:14px;color:#363a42;letter-spacing:-0.362px;left:683.90px;">1.000</div>
<div class="a" style="left:347px;top:809px;width:375px;height:1px;background:#c8c8c8"></div>
<div class="a" style="left:347px;top:810px;width:374px;height:44px;background:#f4f4f4"></div>
<div class="a" style="left:600px;top:812px;width:119px;height:39px;background:#fff;border:1px solid #c6c6c6"></div>
<div class="t" style="top:824.75px;font-size:14px;color:#363a42;letter-spacing:-0.362px;left:676.50px;">1.500</div>
<div class="a" style="left:315px;top:862px;width:1053px;height:1px;background:#c8c8c8"></div>
<div class="a" style="left:22px;top:859px;width:1346px;height:1px;background:#c8c8c8"></div>
<div class="a" style="left:24px;top:860px;width:131px;height:52px;background:#f2f2f2;border:1px solid #c8c8c8;border-top:none;border-right:none"></div>
<svg style="left:40px;top:868px" width="30" height="34"><use href="#book"/></svg>
<div class="t" style="top:879.07px;font-size:13.5px;color:#555;letter-spacing:-0.318px;left:80.50px;">Meli</div>
<div class="a" style="left:119px;top:876px;width:18px;height:18px;background:#fff"></div>
<svg style="left:122px;top:881px" width="12" height="10" viewBox="0 0 12 10"><path d="M1 0.5L10.5 9.5M10.5 0.5L1 9.5" stroke="#1e8fe0" stroke-width="2"/></svg>
<div class="a" style="left:154px;top:859px;width:161px;height:53px;background:#fff;border:1px solid #c8c8c8;border-bottom:none"></div>
<div class="a" style="left:154px;top:911px;width:161px;height:3px;background:#1e9be8"></div>
<svg style="left:171px;top:869px" width="30" height="34"><use href="#book"/></svg>
<div class="t" style="top:880.57px;font-size:13.5px;color:#1e8fe0;letter-spacing:-0.305px;left:211.70px;">Poloaiga</div>
<svg style="left:283px;top:882px" width="12" height="10" viewBox="0 0 12 10"><path d="M1 0.5L10.5 9.5M10.5 0.5L1 9.5" stroke="#1e8fe0" stroke-width="2"/></svg>
<svg style="left:28px;top:917px" width="22" height="22" viewBox="0 0 22 22"><circle cx="10.7" cy="10" r="10" fill="#4a80c0"/><circle cx="10.7" cy="5.5" r="1.7" fill="#fff"/><rect x="9.2" y="8.5" width="3" height="7.5" fill="#fff"/></svg>
<div class="t" style="top:921.55px;font-size:14px;color:#444;letter-spacing:-0.052px;left:70.00px;">7.2.9051.10 Standard</div>
<div class="a" style="left:229px;top:919px;width:1px;height:19px;background:#c0c0c0"></div>
<svg style="left:243px;top:916px" width="18" height="22" viewBox="0 0 18 22"><defs><linearGradient id="gDb" x1="0" y1="0" x2="1" y2="0"><stop offset="0" stop-color="#d88a28"/><stop offset="0.5" stop-color="#fde0a0"/><stop offset="1" stop-color="#d08020"/></linearGradient></defs>
      <rect x="1" y="2.5" width="15" height="17" rx="2" fill="url(#gDb)"/><ellipse cx="8.5" cy="3" rx="7.5" ry="2.5" fill="#fde8b0" stroke="#d08828" stroke-width="0.6"/>
      <path d="M1 8Q8.5 11 16 8M1 13.5Q8.5 16.5 16 13.5" fill="none" stroke="#c07820" stroke-width="0.8"/></svg>
<div class="t" style="top:921.55px;font-size:14px;color:#444;letter-spacing:0.056px;left:281.30px;">localhost (utf8)</div>
<div class="a" style="left:399px;top:919px;width:1px;height:19px;background:#c0c0c0"></div>
<svg style="left:411px;top:916px" width="22" height="22" viewBox="0 0 22 22"><path d="M2 19Q2 13 10 12.5Q18 13 18 19V20H2Z" fill="#70b040" stroke="#4a8a28" stroke-width="0.6"/><ellipse cx="10" cy="7.5" rx="4.2" ry="5.2" fill="#f2b890"/><path d="M5.5 7Q5 1 10 1Q15 1 14.5 7Q13 4 10 4Q7 4 5.5 7Z" fill="#c06830"/></svg>
<div class="t" style="top:921.55px;font-size:14px;color:#444;letter-spacing:-0.500px;left:450.30px;">NIKOLAY (MAIN)</div>
<div class="a" style="left:578px;top:919px;width:1px;height:19px;background:#c0c0c0"></div>
<svg style="left:590px;top:917px" width="20" height="21" viewBox="0 0 20 21"><rect x="1" y="1" width="17.5" height="18.5" fill="#fff" stroke="#7088b8" stroke-width="1"/><rect x="1" y="1" width="17.5" height="4" fill="#e04848"/><text x="9.8" y="17" font-family="Liberation Sans" font-size="10.5" font-weight="bold" fill="#3050a0" text-anchor="middle">31</text></svg>
<div class="t" style="top:921.55px;font-size:14px;color:#444;letter-spacing:0.058px;left:630.70px;">12.09.2024</div>
<div class="a" style="left:727px;top:919px;width:1px;height:19px;background:#c0c0c0"></div>
<div class="t" style="top:921.55px;font-size:14px;color:#444;letter-spacing:0.095px;left:761.80px;">00:00:00:135</div>
<div class="a" style="left:875px;top:919px;width:1px;height:19px;background:#c0c0c0"></div>
<div class="a" style="left:1337px;top:919px;width:1px;height:19px;background:#c0c0c0"></div>
<svg style="left:1351px;top:923px" width="14" height="14" viewBox="0 0 14 14"><g fill="#707070"><rect x="10" y="1" width="1.5" height="1.5"/><rect x="10" y="5" width="1.5" height="1.5"/><rect x="6" y="5" width="1.5" height="1.5"/><rect x="10" y="9" width="1.5" height="1.5"/><rect x="6" y="9" width="1.5" height="1.5"/><rect x="2" y="9" width="1.5" height="1.5"/></g></svg>
</body></html>
